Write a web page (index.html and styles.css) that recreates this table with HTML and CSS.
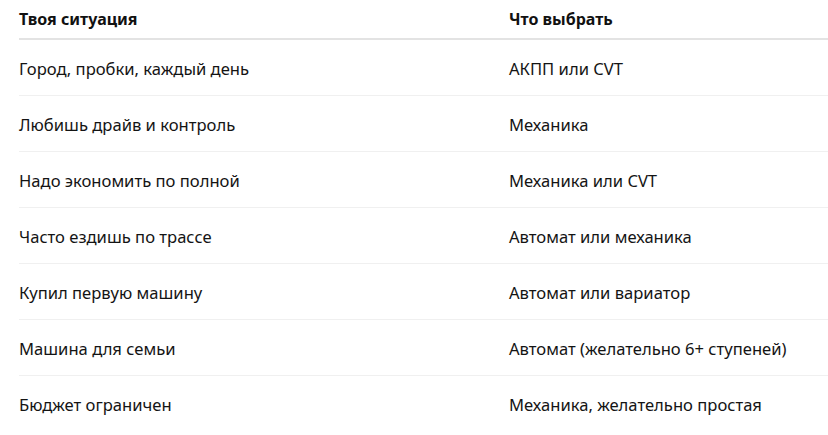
FILE: index.html
```html
<!DOCTYPE html>
<html lang="ru">
<head>
<meta charset="utf-8">
<link rel="stylesheet" href="styles.css">
</head>
<body>
<div class="wrap">
  <table class="tbl">
    <thead>
      <tr><th>Твоя ситуация</th><th>Что выбрать</th></tr>
    </thead>
    <tbody>
      <tr><td>Город, пробки, каждый день</td><td>АКПП или CVT</td></tr>
      <tr><td>Любишь драйв и контроль</td><td>Механика</td></tr>
      <tr><td>Надо экономить по полной</td><td>Механика или CVT</td></tr>
      <tr><td>Часто ездишь по трассе</td><td>Автомат или механика</td></tr>
      <tr><td>Купил первую машину</td><td>Автомат или вариатор</td></tr>
      <tr><td>Машина для семьи</td><td>Автомат (желательно 6+ ступеней)</td></tr>
      <tr><td>Бюджет ограничен</td><td>Механика, желательно простая</td></tr>
    </tbody>
  </table>
</div>
</body>
</html>
```
FILE: styles.css
```css
html, body {
  margin: 0;
  padding: 0;
  background: #ffffff;
  overflow: hidden;
}
.wrap {
  padding-left: 19px;
  font-family: "Noto Sans", "Open Sans", sans-serif;
  font-size: 16.6px;
  color: #141414;
}
.tbl {
  width: 820px;
  border-collapse: collapse;
}
.tbl th {
  text-align: left;
  font-weight: 700;
  font-size: 16px;
  height: 38px;
  padding: 0;
  vertical-align: middle;
  border-bottom: 2px solid #e3e3e3;
  color: #111;
}
.tbl th:first-child, .tbl td:first-child {
  width: 490px;
}
.tbl td {
  height: 53px;
  padding: 2px 0 0;
  vertical-align: middle;
  border-bottom: 1px solid #f0f0f0;
}
.tbl tbody tr:last-child td {
  border-bottom: none;
}
```
